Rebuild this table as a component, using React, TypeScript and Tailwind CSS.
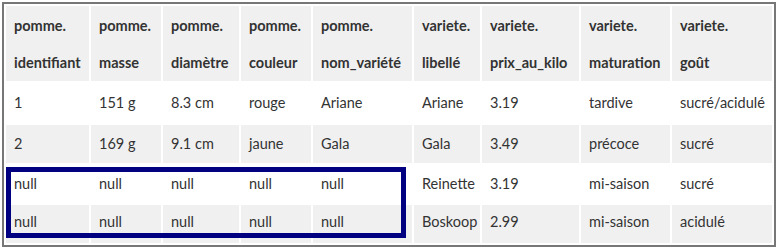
const columns = [
  { table: 'pomme.', field: 'identifiant', w: 'w-[83px]' },
  { table: 'pomme.', field: 'masse', w: 'w-[70px]' },
  { table: 'pomme.', field: 'diamètre', w: 'w-[76px]' },
  { table: 'pomme.', field: 'couleur', w: 'w-[70px]' },
  { table: 'pomme.', field: 'nom_variété', w: 'w-[99px]' },
  { table: 'variete.', field: 'libellé', w: 'w-[66px]' },
  { table: 'variete.', field: 'prix_au_kilo', w: 'w-[97px]' },
  { table: 'variete.', field: 'maturation', w: 'w-[89px]' },
  { table: 'variete.', field: 'goût', w: 'w-[100px]' },
];

const rows = [
  { h: 'h-[40px]', bg: 'bg-white', cells: ['1', '151 g', '8.3 cm', 'rouge', 'Ariane', 'Ariane', '3.19', 'tardive', 'sucré/acidulé'] },
  { h: 'h-[38px]', bg: 'bg-[#f0f0f0]', cells: ['2', '169 g', '9.1 cm', 'jaune', 'Gala', 'Gala', '3.49', 'précoce', 'sucré'] },
  { h: 'h-[38px]', bg: 'bg-white', cells: ['null', 'null', 'null', 'null', 'null', 'Reinette', '3.19', 'mi-saison', 'sucré'] },
  { h: 'h-[38px] pb-1', bg: 'bg-[#f0f0f0]', cells: ['null', 'null', 'null', 'null', 'null', 'Boskoop', '2.99', 'mi-saison', 'acidulé'] },
];

export default function App() {
  return (
    <div className="w-[777px] h-[249px] bg-white pt-[2px] pl-[2px] font-['Lato',sans-serif] text-[14.5px] text-[#333]">
      <div className="relative w-[774px] border-2 border-[#777]">
        <table className="w-[770px] border-separate border-spacing-[2px] table-fixed">
          <colgroup>
            {columns.map((c) => (
              <col key={c.field} className={c.w} />
            ))}
          </colgroup>
          <thead>
            <tr>
              {columns.map((c) => (
                <th
                  key={c.field}
                  className="h-[75px] bg-[#f0f0f0] px-2 text-left align-middle font-bold leading-[37px]"
                >
                  <div>{c.table}</div>
                  <div className="whitespace-nowrap">{c.field}</div>
                </th>
              ))}
            </tr>
          </thead>
          <tbody>
            {rows.map((r, i) => (
              <tr key={i}>
                {r.cells.map((v, j) => (
                  <td key={j} className={`${r.h} ${r.bg} px-2 whitespace-nowrap align-middle`}>
                    {v}
                  </td>
                ))}
              </tr>
            ))}
          </tbody>
        </table>
        <div className="absolute left-[2px] top-[163px] w-[400px] h-[71px] border-[5px] border-[#000080]" />
      </div>
    </div>
  );
}
